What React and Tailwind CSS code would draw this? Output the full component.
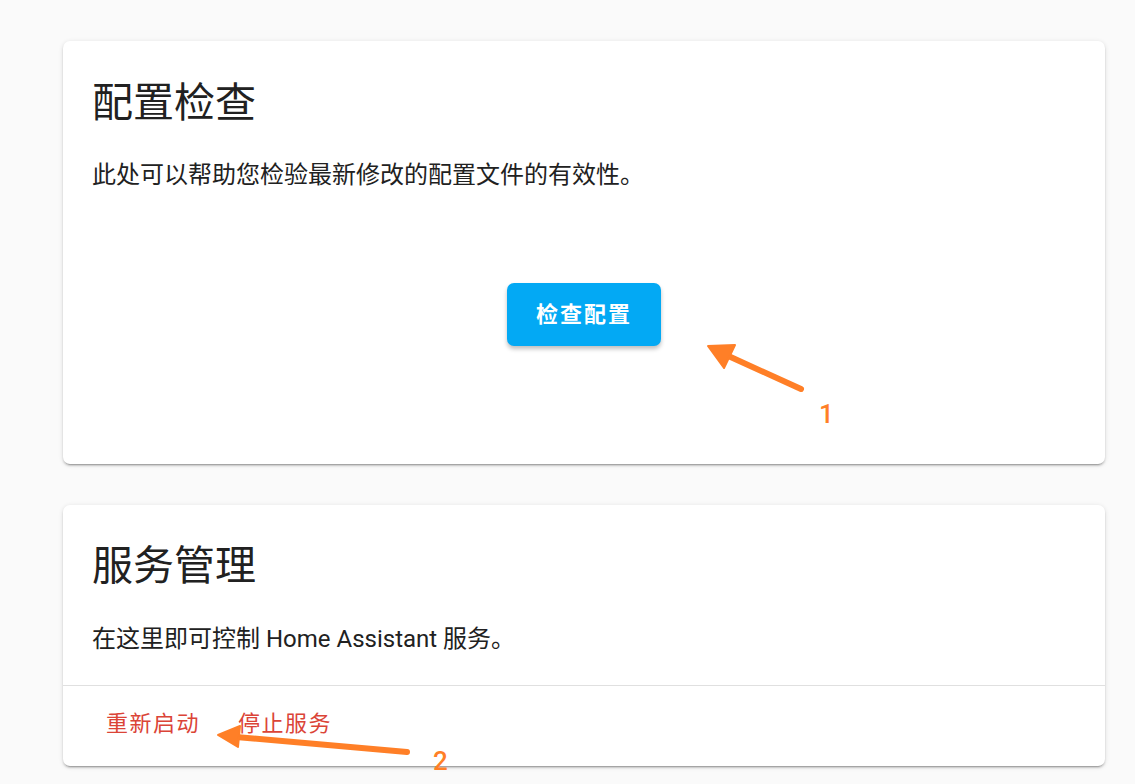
import React from 'react';

const font = "font-['Roboto','Noto_Sans_CJK_SC',sans-serif]";
const cardShadow =
  'shadow-[0_2px_2px_0_rgba(0,0,0,0.14),0_1px_5px_0_rgba(0,0,0,0.12),0_3px_1px_-2px_rgba(0,0,0,0.2)]';

const Annotations = () => (
  <svg
    className="absolute inset-0 pointer-events-none"
    width="1135"
    height="784"
    viewBox="0 0 1135 784"
  >
    <g fill="#ff7f27" stroke="#ff7f27" strokeLinecap="round" strokeLinejoin="round">
      <line x1="801" y1="389" x2="724" y2="354" strokeWidth="6" />
      <polygon points="708,346 735,345 724,368" strokeWidth="2" />
      <line x1="407" y1="752" x2="236" y2="737" strokeWidth="6" />
      <polygon points="218,735 240,726 238,747" strokeWidth="2" />
    </g>
    <text x="819" y="423" fill="#ff7f27" fontSize="26" fontWeight="500" fontFamily="Roboto, sans-serif">1</text>
    <text x="433" y="770" fill="#ff7f27" fontSize="26" fontWeight="500" fontFamily="Roboto, sans-serif">2</text>
  </svg>
);

export default function App() {
  return (
    <div className={`relative w-[1135px] h-[784px] overflow-hidden bg-[#fafafa] text-[#212121] ${font}`}>
      <div className="flex flex-col gap-[41px] pt-[41px] pl-[63px]">
        {/* config check card */}
        <div className={`w-[1042px] bg-white rounded-[7px] ${cardShadow}`}>
          <div className="pt-[38px] px-[29px]">
            <h2 className="text-[41px] leading-[48px] font-normal">配置检查</h2>
            <p className="mt-[30px] text-[24px] leading-[36px]">此处可以帮助您检验最新修改的配置文件的有效性。</p>
          </div>
          <div className="flex justify-center mt-[90px] pb-[118px]">
            <button className="w-[154px] h-[63px] rounded-[7px] bg-[#03a9f4] text-white text-[22px] font-bold tracking-[2px] shadow-[0_3px_4px_0_rgba(0,0,0,0.25)]">
              检查配置
            </button>
          </div>
        </div>

        {/* server management card */}
        <div className={`w-[1042px] bg-white rounded-[7px] ${cardShadow}`}>
          <div className="pt-[37px] px-[29px] pb-[28px]">
            <h2 className="text-[41px] leading-[48px] font-normal">服务管理</h2>
            <p className="mt-[31px] text-[24px] leading-[36px]">在这里即可控制 Home Assistant 服务。</p>
          </div>
          <div className="border-t border-[#e0e0e0] flex items-center gap-[38px] px-[43px] pt-[20px] pb-[24px]">
            <button className="text-[22px] leading-[36px] tracking-[1.5px] text-[#db4437]">重新启动</button>
            <button className="text-[22px] leading-[36px] tracking-[1.5px] text-[#db4437]">停止服务</button>
          </div>
        </div>
      </div>
      <Annotations />
    </div>
  );
}
